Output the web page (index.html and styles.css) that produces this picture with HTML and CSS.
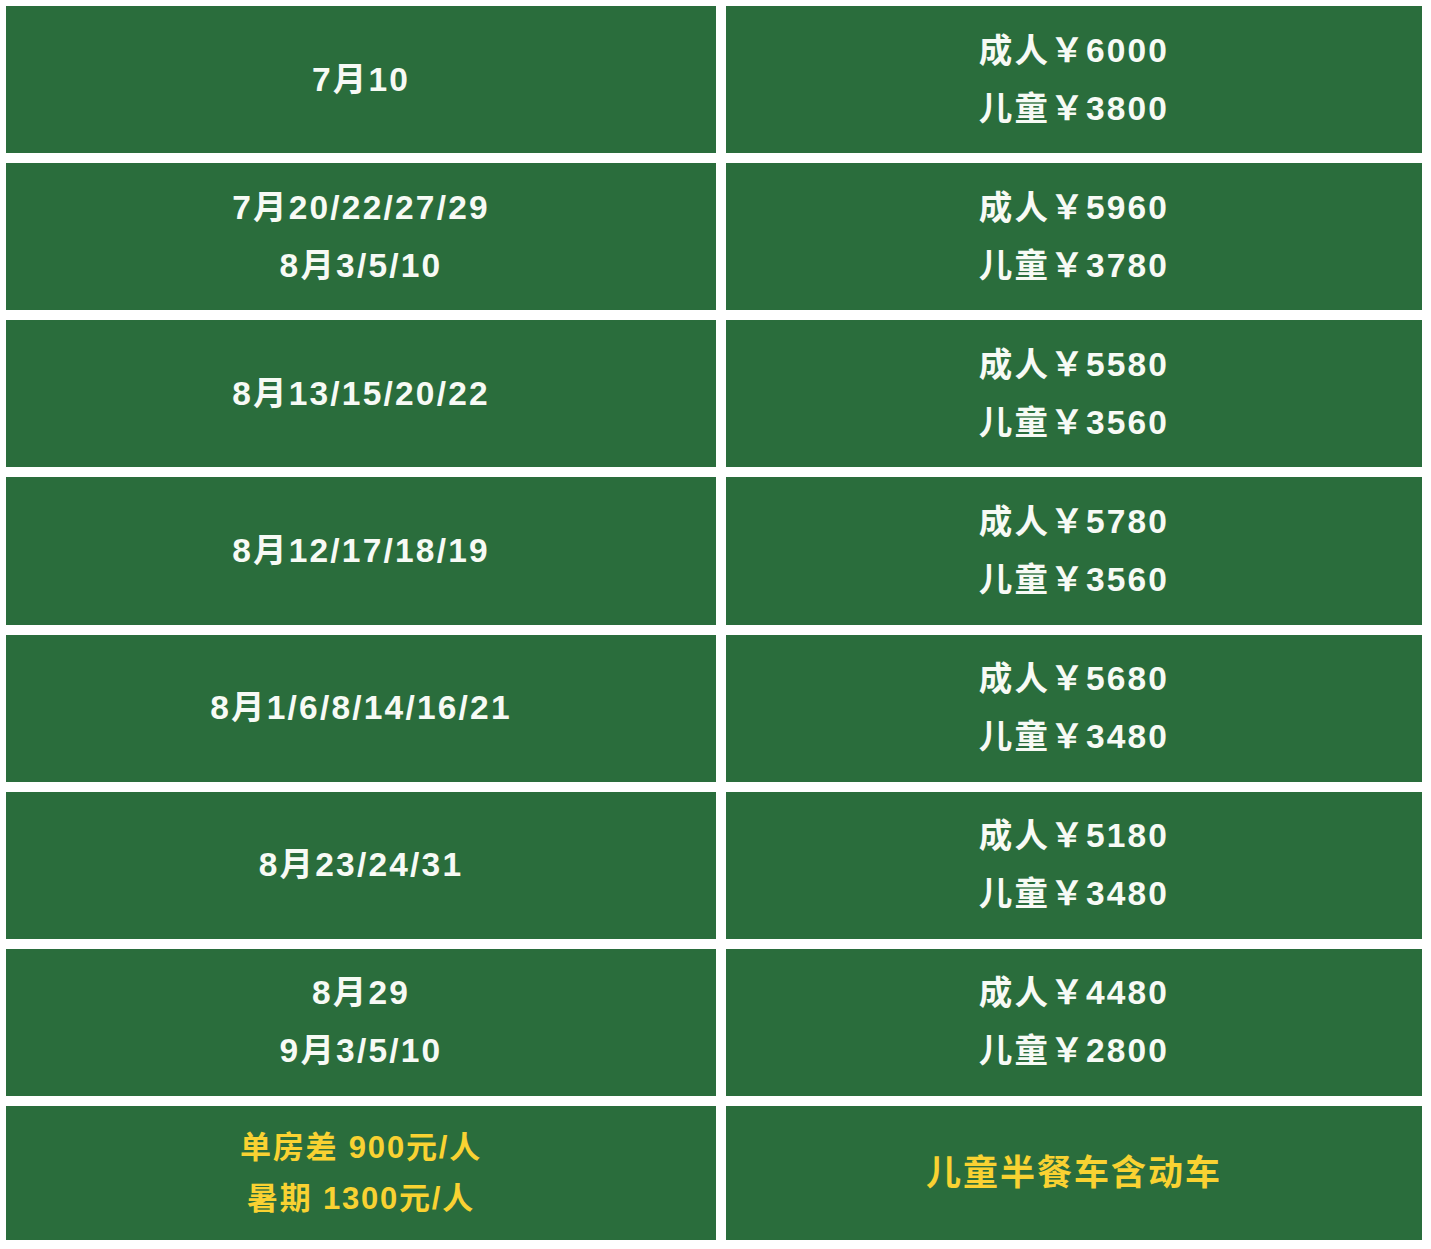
FILE: index.html
```html
<!DOCTYPE html>
<html lang="zh">
<head>
<meta charset="utf-8">
<title>价格表</title>
<link rel="stylesheet" href="styles.css">
</head>
<body>
<div class="table">
  <div class="cell"><p>7月10</p></div>
  <div class="cell"><p>成人￥6000</p><p>儿童￥3800</p></div>
  <div class="cell"><p>7月20/22/27/29</p><p>8月3/5/10</p></div>
  <div class="cell"><p>成人￥5960</p><p>儿童￥3780</p></div>
  <div class="cell"><p>8月13/15/20/22</p></div>
  <div class="cell"><p>成人￥5580</p><p>儿童￥3560</p></div>
  <div class="cell"><p>8月12/17/18/19</p></div>
  <div class="cell"><p>成人￥5780</p><p>儿童￥3560</p></div>
  <div class="cell"><p>8月1/6/8/14/16/21</p></div>
  <div class="cell"><p>成人￥5680</p><p>儿童￥3480</p></div>
  <div class="cell"><p>8月23/24/31</p></div>
  <div class="cell"><p>成人￥5180</p><p>儿童￥3480</p></div>
  <div class="cell"><p>8月29</p><p>9月3/5/10</p></div>
  <div class="cell"><p>成人￥4480</p><p>儿童￥2800</p></div>
  <div class="cell note"><p>单房差 900元/人</p><p>暑期 1300元/人</p></div>
  <div class="cell note big"><p>儿童半餐车含动车</p></div>
</div>
</body>
</html>
```
FILE: styles.css
```css
html, body {
  margin: 0;
  padding: 0;
  background: #ffffff;
}
body {
  padding: 6px 0 0 6px;
  font-family: "Liberation Sans", "Noto Sans CJK SC", sans-serif;
}
.table {
  display: grid;
  grid-template-columns: 710px 696px;
  grid-template-rows: repeat(7, 147.14px) 134px;
  gap: 10px;
}
.cell {
  background: #2a6d3c;
  color: #f7faf5;
  font-weight: bold;
  font-size: 33.5px;
  letter-spacing: 2.2px;
  line-height: 58px;
  display: flex;
  flex-direction: column;
  align-items: center;
  justify-content: center;
  text-align: center;
}
.cell p {
  margin: 0;
}
.note {
  color: #f9d232;
  font-size: 31px;
  line-height: 51px;
  letter-spacing: 1.8px;
}
.note.big {
  font-size: 35px;
  letter-spacing: 2px;
}
```
